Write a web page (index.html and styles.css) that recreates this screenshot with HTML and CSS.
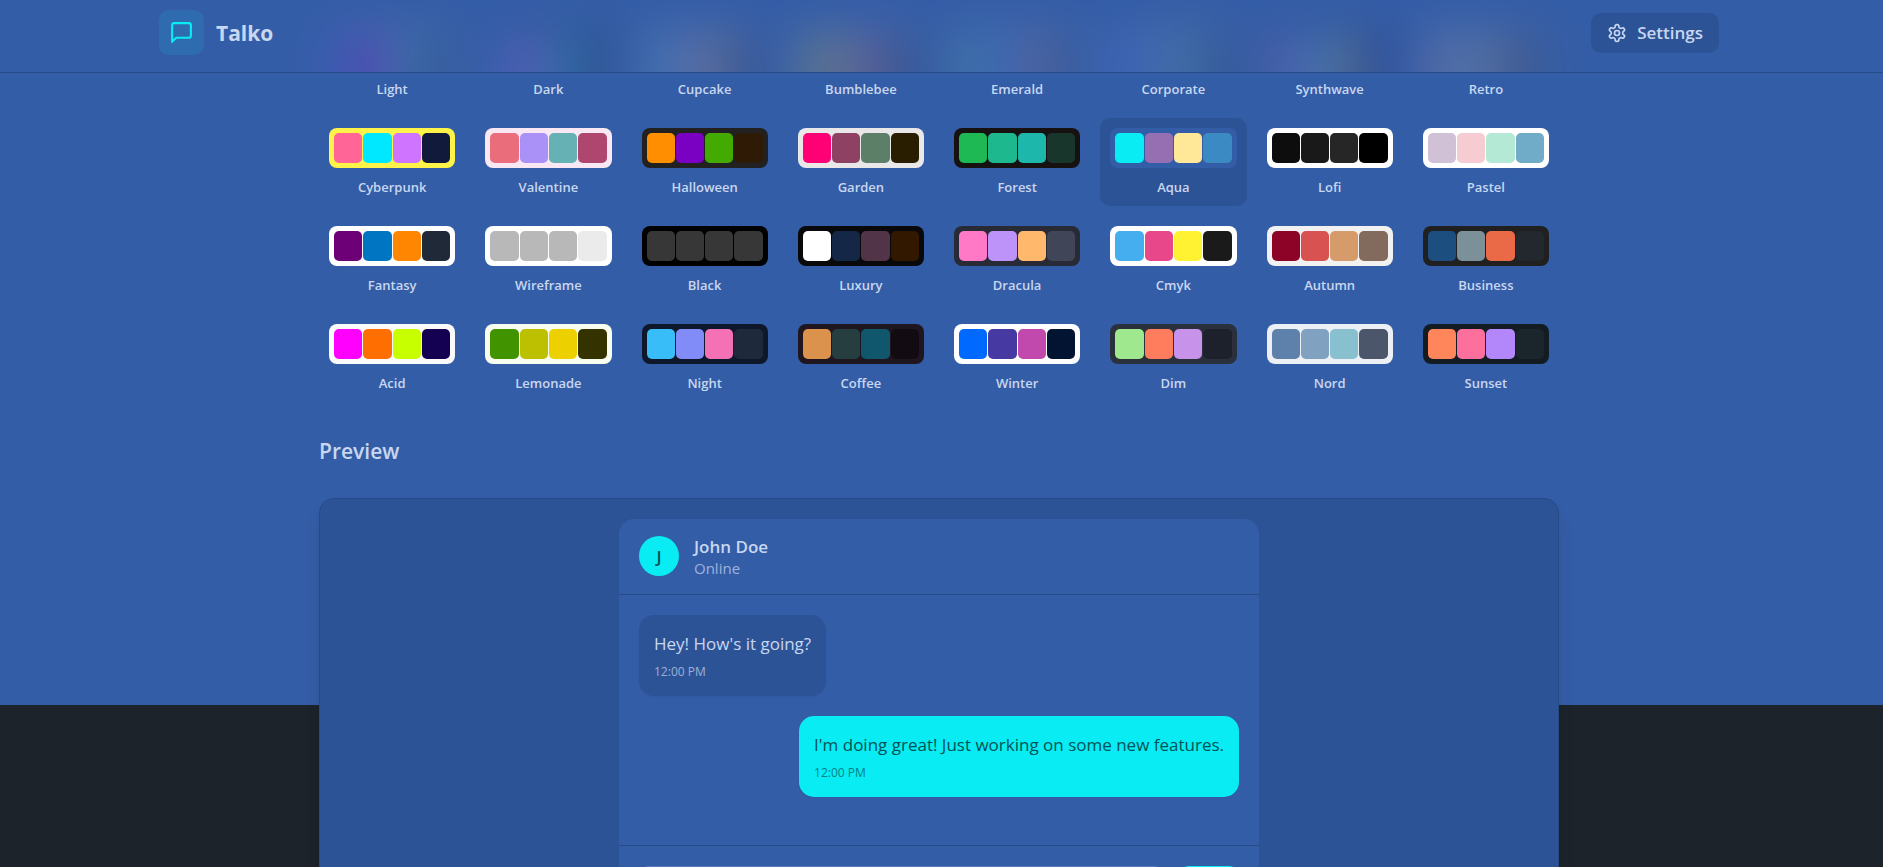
FILE: index.html
```html
<!DOCTYPE html>
<html lang="en">
<head>
<meta charset="utf-8">
<meta name="viewport" content="width=device-width, initial-scale=1">
<title>Talko</title>
<link rel="stylesheet" href="styles.css">
</head>
<body>
<div class="app">
  <header class="topbar">
    <div class="topbar-glow" id="glow" aria-hidden="true"></div>
    <div class="topbar-inner">
      <a class="brand" href="#">
        <span class="brand-mark">
          <svg class="brand-icon" viewBox="0 0 24 24" aria-hidden="true"><path d="M21 15a2 2 0 0 1-2 2H7l-4 4V5a2 2 0 0 1 2-2h14a2 2 0 0 1 2 2z"/></svg>
        </span>
        <span class="brand-name">Talko</span>
      </a>
      <a class="settings" href="#">
        <svg class="settings-icon" viewBox="0 0 24 24" aria-hidden="true"><path d="M12.22 2h-.44a2 2 0 0 0-2 2v.18a2 2 0 0 1-1 1.73l-.43.25a2 2 0 0 1-2 0l-.15-.08a2 2 0 0 0-2.73.73l-.22.38a2 2 0 0 0 .73 2.73l.15.1a2 2 0 0 1 1 1.72v.51a2 2 0 0 1-1 1.74l-.15.09a2 2 0 0 0-.73 2.73l.22.38a2 2 0 0 0 2.73.73l.15-.08a2 2 0 0 1 2 0l.43.25a2 2 0 0 1 1 1.73V20a2 2 0 0 0 2 2h.44a2 2 0 0 0 2-2v-.18a2 2 0 0 1 1-1.73l.43-.25a2 2 0 0 1 2 0l.15.08a2 2 0 0 0 2.73-.73l.22-.39a2 2 0 0 0-.73-2.73l-.15-.08a2 2 0 0 1-1-1.74v-.5a2 2 0 0 1 1-1.74l.15-.09a2 2 0 0 0 .73-2.73l-.22-.38a2 2 0 0 0-2.73-.73l-.15.08a2 2 0 0 1-2 0l-.43-.25a2 2 0 0 1-1-1.73V4a2 2 0 0 0-2-2z"/><circle cx="12" cy="12" r="3"/></svg>
        <span>Settings</span>
      </a>
    </div>
  </header>
  <main class="page">
    <div class="theme-grid" id="themes"></div>
    <h2 class="section-title">Preview</h2>
    <section class="preview">
      <div class="chat">
        <div class="chat-head">
          <div class="avatar">J</div>
          <div>
            <h3 class="chat-name">John Doe</h3>
            <p class="chat-status">Online</p>
          </div>
        </div>
        <div class="messages">
          <div class="bubble"><p class="bubble-text">Hey! How's it going?</p><p class="bubble-time">12:00 PM</p></div>
          <div class="bubble bubble-own"><p class="bubble-text">I'm doing great! Just working on some new features.</p><p class="bubble-time">12:00 PM</p></div>
        </div>
        <form class="composer">
          <input class="composer-input" type="text" aria-label="Message">
          <button class="composer-send" type="button" aria-label="Send"></button>
        </form>
      </div>
    </section>
  </main>
</div>
<script src="themes.js"></script>
</body>
</html>
```
FILE: styles.css
```css
:root {
  --base-100: #345da7;
  --base-200: #2d5397;
  --base-300: #264a86;
  --content: #c8d7f0;
  --primary: #09ecf3;
  --primary-content: #005355;
}
* { box-sizing: border-box; margin: 0; }
html { height: 100%; overflow: hidden; background: #1d232a; }
body {
  height: 100%;
  overflow: hidden;
  font-family: "Segoe UI", "Open Sans", "Noto Sans", sans-serif;
  color: var(--content);
}
a { color: inherit; text-decoration: none; }
.app { height: calc(100% - 162px); padding-right: 5px; background: var(--base-100); }
.topbar {
  position: fixed;
  inset: 0 0 auto 0;
  z-index: 10;
  padding: 10px 5px 17px 0;
  border-bottom: 1px solid var(--base-300);
  background: var(--base-100);
}
/* Soft colour cast of the swatch row that sits behind the bar */
.topbar-glow {
  position: absolute;
  inset: 0 5px 0 0;
  z-index: -1;
  overflow: hidden;
  opacity: .19;
}
.glow-row {
  display: grid;
  grid-template-columns: repeat(8, minmax(0, 1fr));
  gap: 30px;
  max-width: 1280px;
  margin: 0 auto;
  padding: 30px 30px 0;
  filter: blur(22px);
}
.topbar-glow .swatch { height: 80px; }
.topbar-inner {
  display: flex;
  align-items: center;
  justify-content: space-between;
  max-width: 1600px;
  margin: 0 auto;
  padding: 0 20px;
}
.brand { display: flex; align-items: center; gap: 12px; }
.brand-mark {
  display: grid;
  place-items: center;
  width: 45px;
  height: 45px;
  border-radius: 10px;
  background: rgb(9 236 243 / 10%);
}
.brand-icon, .settings-icon { fill: none; stroke: currentColor; stroke-width: 2; stroke-linecap: round; stroke-linejoin: round; }
.brand-icon { width: 25px; height: 25px; color: var(--primary); }
.brand-name { font-size: 21px; font-weight: 700; }
.settings {
  display: flex;
  align-items: center;
  gap: 10px;
  height: 40px;
  padding: 0 16px;
  border-radius: 10px;
  background: var(--base-200);
  font-size: 17px;
  font-weight: 600;
}
.settings-icon { width: 20px; height: 20px; }
.page { max-width: 1280px; margin: 0 auto; padding: 20px 20px 0; }
.theme-grid { display: grid; grid-template-columns: repeat(8, minmax(0, 1fr)); gap: 10px; }
.theme {
  display: flex;
  flex-direction: column;
  gap: 8px;
  padding: 10px;
  border: 0;
  border-radius: 10px;
  background: none;
  color: inherit;
  font: 600 13px/20px "Segoe UI", "Open Sans", "Noto Sans", sans-serif;
  text-align: center;
}
.theme-active { background: var(--base-200); }
.swatch {
  display: grid;
  grid-template-columns: repeat(4, 1fr);
  gap: 1px;
  width: 100%;
  height: 40px;
  padding: 5px;
  border-radius: 8px;
}
.swatch span { border-radius: 5px; }
.theme-label { padding-top: 2px; line-height: 18px; }
.section-title { margin-top: 33px; font-size: 21px; font-weight: 600; line-height: 32px; }
.preview {
  margin-top: 31px;
  padding: 20px;
  border: 1px solid var(--base-300);
  border-radius: 15px;
  background: var(--base-200);
  box-shadow: 0 12px 20px -4px rgb(0 0 0 / 10%), 0 5px 8px -5px rgb(0 0 0 / 10%);
}
.chat {
  max-width: 640px;
  margin: 0 auto;
  overflow: hidden;
  border-radius: 15px;
  background: var(--base-100);
}
.chat-head {
  display: flex;
  align-items: center;
  gap: 15px;
  padding: 15px 20px 16px;
  border-bottom: 1px solid var(--base-300);
}
.avatar {
  display: grid;
  place-items: center;
  width: 40px;
  height: 40px;
  border-radius: 50%;
  background: var(--primary);
  color: var(--primary-content);
  font-size: 17px;
  font-weight: 600;
}
.chat-name { padding-top: 2px; font-size: 17px; font-weight: 600; line-height: 22px; }
.chat-status { font-size: 15px; line-height: 20px; opacity: .7; }
.messages { display: flex; flex-direction: column; align-items: flex-start; gap: 20px; padding: 20px 20px 48px; }
.bubble {
  max-width: 80%;
  padding: 15px;
  border-radius: 15px;
  background: var(--base-200);
  box-shadow: 0 1px 2px rgb(0 0 0 / 5%);
}
.bubble-own { align-self: flex-end; background: var(--primary); color: var(--primary-content); }
.bubble-text { font-size: 17px; line-height: 28px; }
.bubble-time { padding-top: 4px; font-size: 12px; line-height: 19px; opacity: .7; }
.composer { display: flex; gap: 15px; padding: 20px; border-top: 1px solid var(--base-300); }
.composer-input {
  flex: 1;
  height: 50px;
  border: 1px solid rgb(200 215 240 / 25%);
  border-radius: 10px;
  background: var(--base-100);
}
.composer-send { width: 60px; height: 50px; border: 0; border-radius: 10px; background: var(--primary); }
```
FILE: themes.js
```js
const themes = [
  ["Light", "#ffffff", "#570df8", "#f000b8", "#37cdbe", "#2b3440"],
  ["Dark", "#1d232a", "#7480ff", "#ff52d9", "#00cdb7", "#2a323c"],
  ["Cupcake", "#faf7f5", "#65c3c8", "#ef9fbc", "#eeaf3a", "#291334"],
  ["Bumblebee", "#ffffff", "#ffd900", "#ff9a39", "#f15e59", "#1c1917"],
  ["Emerald", "#ffffff", "#66cc8a", "#377cfb", "#f68067", "#333c4d"],
  ["Corporate", "#ffffff", "#4b6bfb", "#7b92b2", "#67cba0", "#181a2a"],
  ["Synthwave", "#1a103d", "#e779c1", "#58c7f3", "#f3cc30", "#221551"],
  ["Retro", "#ece3ca", "#ef9995", "#a4cbb4", "#dc8850", "#2e282a"],
  ["Cyberpunk", "#fff248", "#ff6596", "#00e8ff", "#ce74ff", "#111a3b"],
  ["Valentine", "#fae7f4", "#e96d7b", "#a991f7", "#66b1b3", "#af4670"],
  ["Halloween", "#212121", "#ff8f00", "#7a00c2", "#42aa00", "#2f1b05"],
  ["Garden", "#e9e7e7", "#ff0075", "#8e4162", "#5c7f67", "#291e00"],
  ["Forest", "#171212", "#1eb854", "#1db88e", "#1db8ab", "#19362d"],
  ["Aqua", "#345da7", "#09ecf3", "#966fb3", "#ffe999", "#3b8ac4"],
  ["Lofi", "#ffffff", "#0d0d0d", "#1a1919", "#262626", "#000000"],
  ["Pastel", "#ffffff", "#d1c1d7", "#f6cbd1", "#b4e9d6", "#70acc7"],
  ["Fantasy", "#ffffff", "#6d0076", "#0075c2", "#ff8600", "#1f2937"],
  ["Wireframe", "#ffffff", "#b8b8b8", "#b8b8b8", "#b8b8b8", "#ebebeb"],
  ["Black", "#000000", "#373737", "#373737", "#373737", "#373737"],
  ["Luxury", "#09090b", "#ffffff", "#152747", "#513448", "#331800"],
  ["Dracula", "#282a36", "#ff79c6", "#bd93f9", "#ffb86c", "#414558"],
  ["Cmyk", "#ffffff", "#45aeee", "#e8488a", "#fff232", "#1a1a1a"],
  ["Autumn", "#f1f1f1", "#8c0327", "#d85251", "#d59b6a", "#826a5c"],
  ["Business", "#202020", "#1c4e80", "#7c909a", "#ea6947", "#23282f"],
  ["Acid", "#fafafa", "#ff00ff", "#ff6e00", "#c8ff00", "#140151"],
  ["Lemonade", "#f8fdef", "#419400", "#bdc000", "#edd000", "#343300"],
  ["Night", "#0f172a", "#38bdf8", "#818cf8", "#f471b5", "#1e293b"],
  ["Coffee", "#20161f", "#db924c", "#263e3f", "#10576d", "#120c12"],
  ["Winter", "#ffffff", "#0069ff", "#463aa2", "#c148ac", "#021431"],
  ["Dim", "#2a303c", "#9fe88d", "#ff7d5c", "#c792e9", "#1c212b"],
  ["Nord", "#eceff4", "#5e81ac", "#81a1c1", "#88c0d0", "#4c566a"],
  ["Sunset", "#121c22", "#ff865b", "#fd6f9c", "#b387fa", "#1b262c"]
];

function makeSwatch(base, colors) {
  const swatch = document.createElement("span");
  swatch.className = "swatch";
  swatch.style.background = base;
  for (const color of colors) {
    const chip = document.createElement("span");
    chip.style.background = color;
    swatch.append(chip);
  }
  return swatch;
}

const grid = document.getElementById("themes");
for (const [name, base, ...colors] of themes) {
  const cell = document.createElement("button");
  cell.type = "button";
  cell.className = name === "Aqua" ? "theme theme-active" : "theme";
  const label = document.createElement("span");
  label.className = "theme-label";
  label.textContent = name;
  cell.append(makeSwatch(base, colors), label);
  grid.append(cell);
}

const glowRow = document.createElement("div");
glowRow.className = "glow-row";
for (const [, base, ...colors] of themes.slice(0, 8)) {
  glowRow.append(makeSwatch(base, colors));
}
document.getElementById("glow").append(glowRow);
```
